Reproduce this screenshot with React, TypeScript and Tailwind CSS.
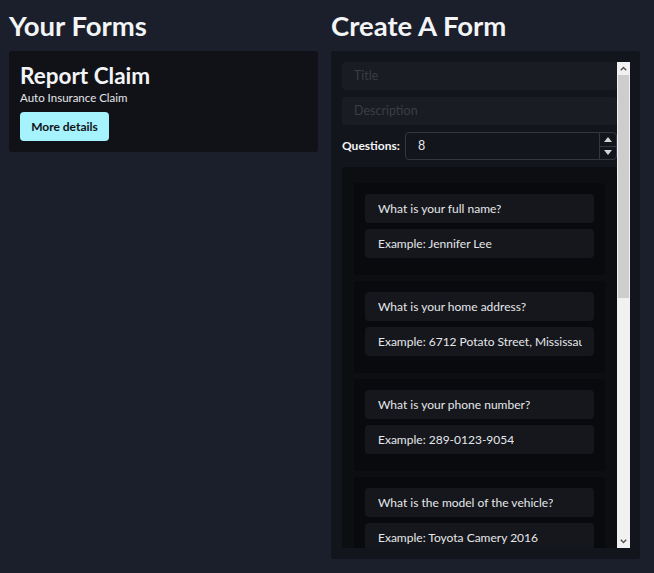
import React from "react";

const questions = [
  ["What is your full name?", "Example: Jennifer Lee"],
  ["What is your home address?", "Example: 6712 Potato Street, Mississauga, ON"],
  ["What is your phone number?", "Example: 289-0123-9054"],
  ["What is the model of the vehicle?", "Example: Toyota Camery 2016"],
  ["What is the license plate?", "Example: ABCD 123"],
];

export default function App() {
  return (
    <div
      className="w-[654px] h-[573px] overflow-hidden bg-[#1b1f2b] text-white flex gap-[13px] pl-[9px]"
      style={{ fontFamily: 'Lato, "Noto Sans", sans-serif' }}
    >
      <div className="w-[309px] flex flex-col">
        <h1 className="text-[27.5px] leading-[34px] font-bold mt-[9px] mb-[8px] text-[#f3f4f6]">Your Forms</h1>
        <div className="bg-[#111218] rounded-[3px] h-[101px] px-[11px] pt-[12px]">
          <div className="text-[22.5px] leading-[26px] font-bold text-[#f3f4f6]">Report Claim</div>
          <div className="text-[11.5px] leading-[16px] text-[#e5e7eb] mt-[1px]">Auto Insurance Claim</div>
          <button className="mt-[6px] h-[29px] w-[89px] rounded-[4px] bg-[#a5f3fc] text-[#111218] text-[12px] font-bold">
            More details
          </button>
        </div>
      </div>

      <div className="w-[309px] flex flex-col">
        <h1 className="text-[27.5px] leading-[34px] font-bold mt-[9px] mb-[8px] text-[#f3f4f6]">Create A Form</h1>
        <div className="bg-[#13151c] rounded-[3px] h-[508px] pl-[11px] pr-[10px] pt-[11px]">
          <div className="flex h-[486px]">
            <div className="w-[275px] flex flex-col gap-[7px] overflow-hidden">
              <div className="h-[28px] shrink-0 rounded-[4px] bg-[#1a1c24] px-[12px] flex items-center text-[12.5px] text-[#393c47]">Title</div>
              <div className="h-[28px] shrink-0 rounded-[4px] bg-[#1a1c24] px-[12px] flex items-center text-[12.5px] text-[#393c47]">Description</div>
              <div className="h-[28px] shrink-0 flex items-center">
                <span className="w-[63px] text-[12px] font-bold text-[#f3f4f6]">Questions:</span>
                <div className="flex-1 h-full rounded-[4px] border border-[#343742] bg-[#13151c] flex items-stretch">
                  <span className="flex-1 pl-[12px] flex items-center text-[12.5px] text-[#e5e7eb]">8</span>
                  <div className="w-[17px] border-l border-[#343742] flex flex-col">
                    <div className="flex-1 flex items-center justify-center border-b border-[#343742]">
                      <svg width="8" height="5" viewBox="0 0 8 5"><path d="M0 5 L4 0 L8 5 Z" fill="#d4d4d4" /></svg>
                    </div>
                    <div className="flex-1 flex items-center justify-center">
                      <svg width="8" height="5" viewBox="0 0 8 5"><path d="M0 0 L4 5 L8 0 Z" fill="#d4d4d4" /></svg>
                    </div>
                  </div>
                </div>
              </div>
              <div className="flex-1 bg-[#0d0e12] rounded-t-[3px] px-[12px] pt-[16px] flex flex-col gap-[6px] overflow-hidden">
                {questions.map(([q, ex]) => (
                  <div key={q} className="shrink-0 h-[92px] bg-[#090a0d] rounded-[3px] px-[11px] pt-[11px] flex flex-col gap-[6px]">
                    <div className="h-[29px] rounded-[4px] bg-[#16171c] pl-[13px] pr-[12px] flex items-center text-[12px] text-[#e5e7eb]">
                      <span className="whitespace-nowrap overflow-hidden">{q}</span>
                    </div>
                    <div className="h-[29px] rounded-[4px] bg-[#16171c] pl-[13px] pr-[12px] flex items-center text-[12px] text-[#e5e7eb]">
                      <span className="whitespace-nowrap overflow-hidden">{ex}</span>
                    </div>
                  </div>
                ))}
              </div>
            </div>
            <div className="w-[13px] bg-[#f1f1f1] flex flex-col">
              <div className="h-[13px] flex items-center justify-center">
                <svg width="7" height="5" viewBox="0 0 7 5"><path d="M0.8 4.2 L3.5 1.5 L6.2 4.2" fill="none" stroke="#505050" strokeWidth="1.4" /></svg>
              </div>
              <div className="h-[223px] mx-[1px] bg-[#cdcdcd]" />
              <div className="flex-1" />
              <div className="h-[13px] flex items-center justify-center">
                <svg width="7" height="5" viewBox="0 0 7 5"><path d="M0.8 0.8 L3.5 3.5 L6.2 0.8" fill="none" stroke="#505050" strokeWidth="1.4" /></svg>
              </div>
            </div>
          </div>
        </div>
      </div>
    </div>
  );
}
